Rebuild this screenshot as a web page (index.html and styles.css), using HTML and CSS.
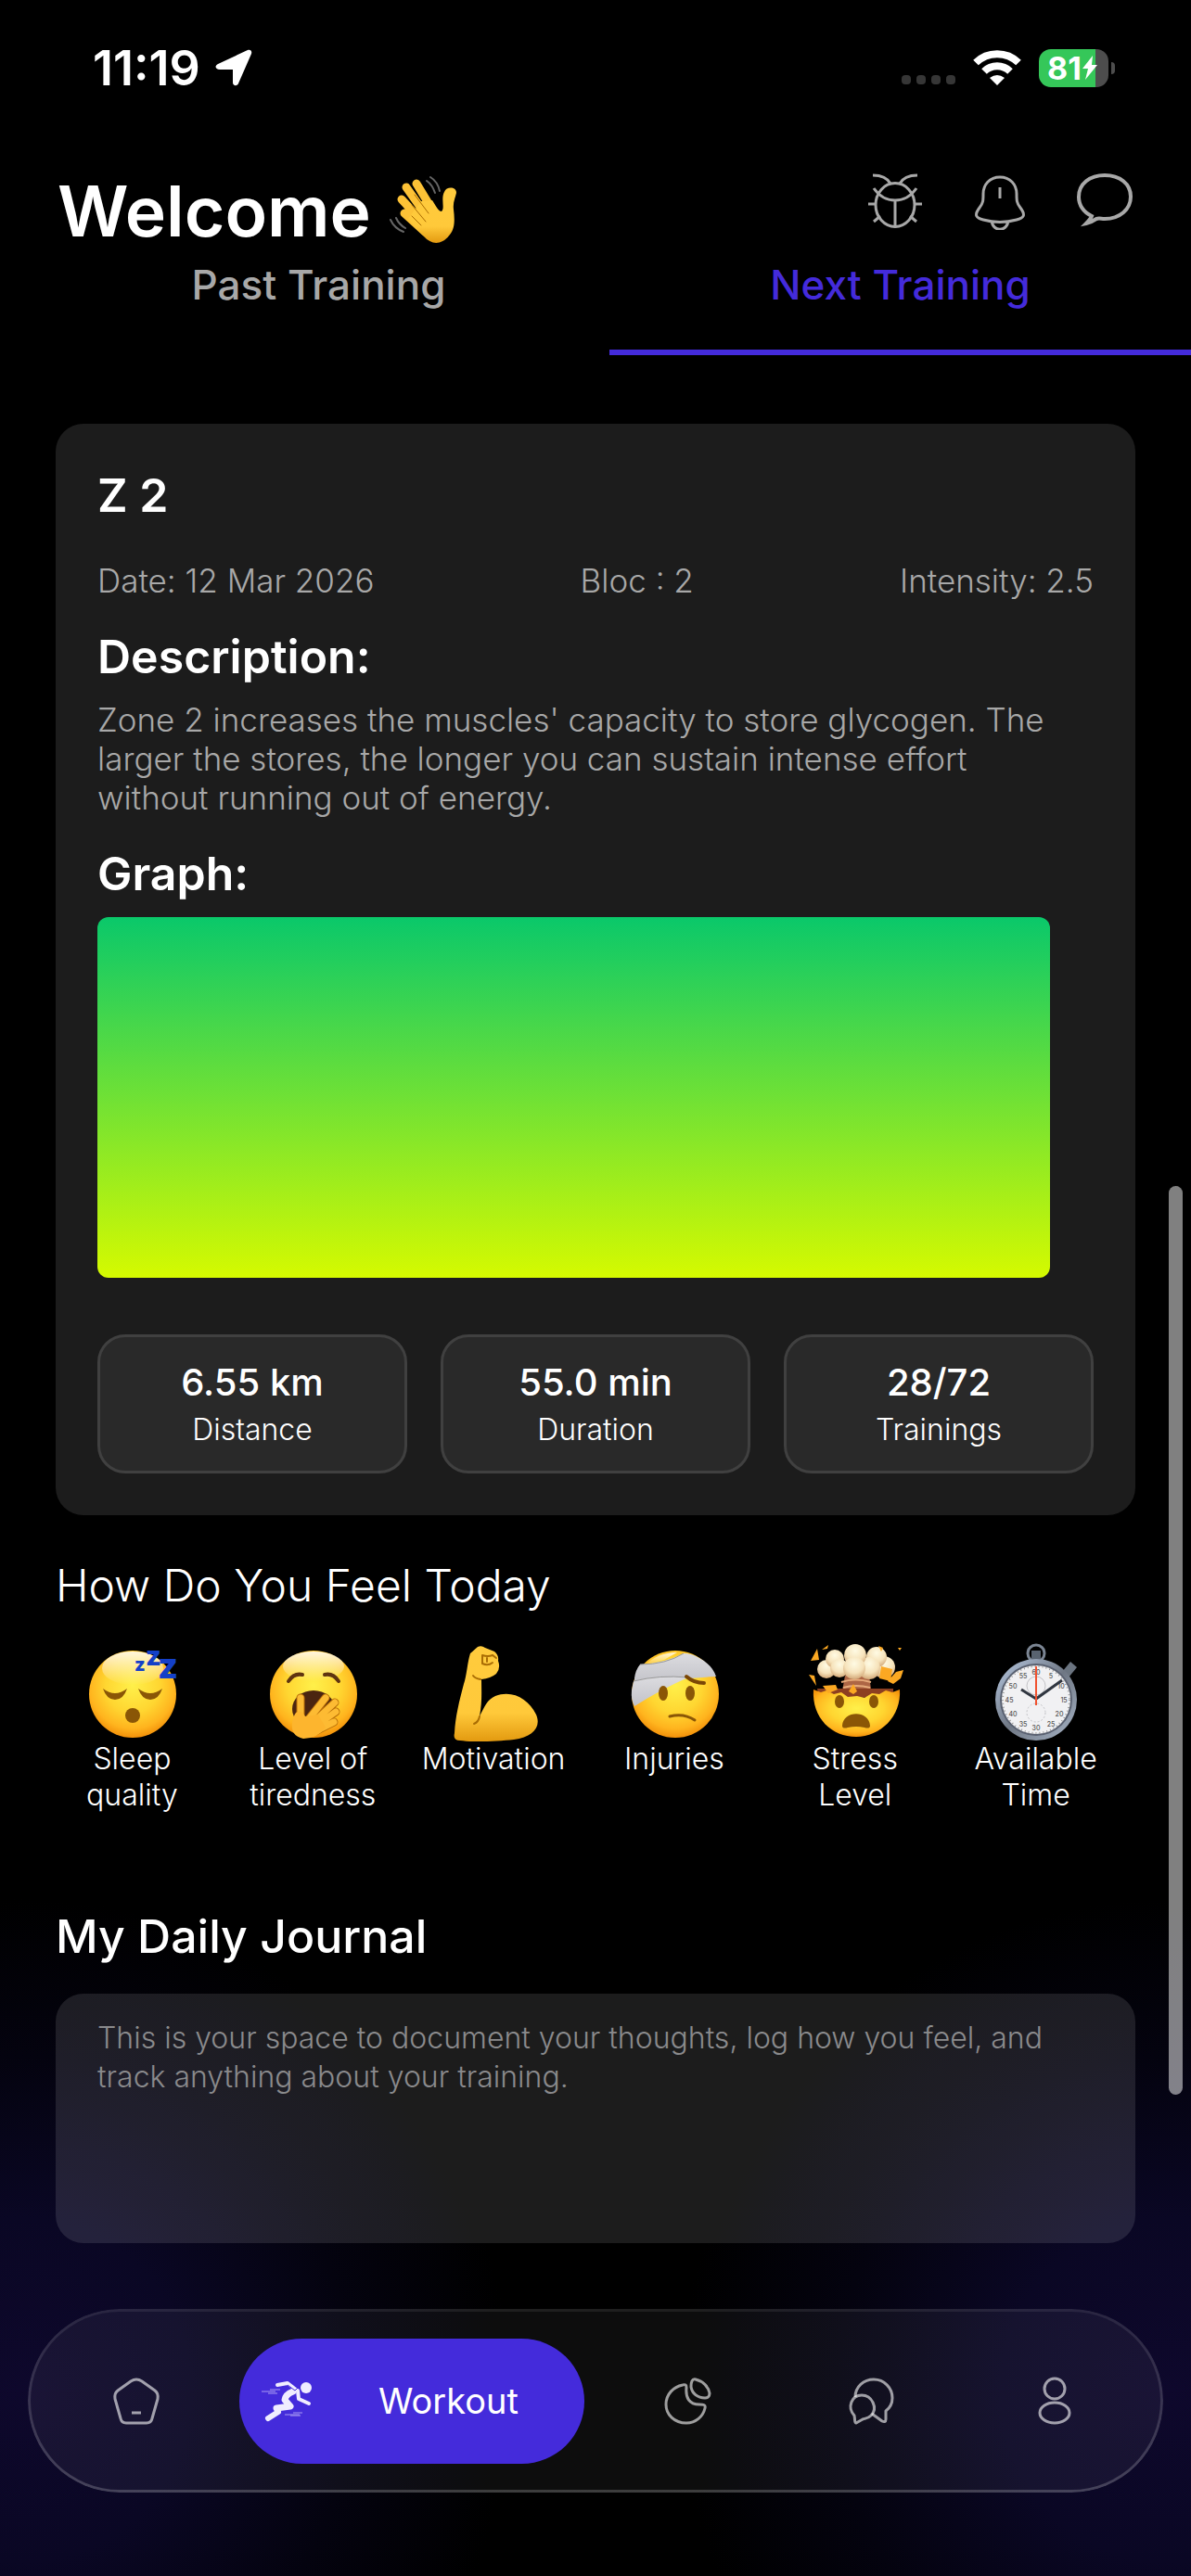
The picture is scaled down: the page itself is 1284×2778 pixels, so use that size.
FILE: index.html
```html
<!DOCTYPE html>
<html lang="en">
  <head>
    <title>Workout</title>
    <meta charset="utf-8">
    <meta name="viewport" content="width=device-width, initial-scale=1">
    <link rel="stylesheet" href="styles.css">
  </head>
  <body>
    <!-- gradients shared by the emoji -->
    <svg class="defs" width="0" height="0" aria-hidden="true">
      <defs>
        <radialGradient id="face" cx=".5" cy=".4" r=".62">
          <stop offset="0" stop-color="#fff04a"/>
          <stop offset=".5" stop-color="#ffd631"/>
          <stop offset=".8" stop-color="#ffb41e"/>
          <stop offset="1" stop-color="#f08a06"/>
        </radialGradient>
        <linearGradient id="shine" x1="0" y1="0" x2="0" y2="1">
          <stop offset="0" stop-color="#fff" stop-opacity=".85"/>
          <stop offset="1" stop-color="#fff" stop-opacity="0"/>
        </linearGradient>
        <linearGradient id="skin" x1="0" y1="0" x2="0" y2="1">
          <stop offset="0" stop-color="#ffcb3d"/>
          <stop offset=".7" stop-color="#ffc93a"/>
          <stop offset="1" stop-color="#e39a10"/>
        </linearGradient>
        <linearGradient id="bandage" x1="0" y1="0" x2="0" y2="1">
          <stop offset="0" stop-color="#dcdce0"/>
          <stop offset="1" stop-color="#c2c2c8"/>
        </linearGradient>
        <radialGradient id="puff" cx=".5" cy=".3" r=".7">
          <stop offset="0" stop-color="#fffbe4"/>
          <stop offset=".6" stop-color="#f6e3bb"/>
          <stop offset="1" stop-color="#d3a878"/>
        </radialGradient>
        <linearGradient id="steel" x1="0" y1="0" x2="1" y2="1">
          <stop offset="0" stop-color="#b9cbe4"/>
          <stop offset=".5" stop-color="#6f7784"/>
          <stop offset="1" stop-color="#a9b6c8"/>
        </linearGradient>
      </defs>
    </svg>

    <div class="status">
      <span class="time">11:19</span>
      <svg width="40" height="40" viewBox="0 0 40 40" role="img" aria-label="Location in use"><path d="M3 16 35 1c3-1 5 1 4 4L25 37c-1 3-6 3-6-1V22H5c-5 0-6-4-2-6z" fill="#fff"/></svg>
      <span class="signal"><i></i><i></i><i></i><i></i></span>
      <svg width="52" height="38" viewBox="0 0 52 38" role="img" aria-label="Wi-Fi">
        <g fill="none" stroke="#fff" stroke-width="8">
          <path d="M3 13.500a33 33 0 0 1 46 0"/>
          <path d="M12 23a20 20 0 0 1 28 0"/>
        </g>
        <path d="M26 38l-8-8q8-6 16 0z" fill="#fff"/>
      </svg>
      <span class="battery">81<svg width="18" height="26" viewBox="0 0 18 26" aria-hidden="true"><path d="M12 0 1 14h6L4 26 17 10h-6z" fill="#fff"/></svg></span>
    </div>

    <header class="header">
      <h1>Welcome</h1>
      <svg class="wave" width="74" height="74" viewBox="0 0 74 74" role="img" aria-label="Waving hand">
        <g fill="none" stroke="#666" stroke-width="2" stroke-linecap="round">
          <path d="M40 6q6 4 9 13M44 2q8 5 10 15M7 46q3 7 10 11M1 48q4 9 14 13"/>
        </g>
        <g stroke="#fdc236" stroke-width="9" stroke-linecap="round" fill="none">
          <path d="M29 9 46 37M18 13 40 44M13 26 37 52M16 41 38 61"/>
        </g>
        <path d="M34 28 46 27c5 8 7 12 10 12 4-3-1-14 3-21 2-6 13-6 13 1-1 5-4 10-3 18 1 9 2 20-4 27-9 12-20 11-28 2L20 47z" fill="url(#skin)"/>
        <path d="M27 21l15 20M24 32l15 18M24 44l10 10" stroke="#a96a00" stroke-width="1" stroke-linecap="round"/>
      </svg>
      <div class="actions">
        <button type="button" aria-label="Report a bug">
          <svg viewBox="0 0 62 62">
            <ellipse cx="31" cy="35" rx="21" ry="23.500"/>
            <path d="M8 17q9 13 23 13t23-13M31 30v28M7 3q14 0 19 9M55 3q-14 0-19 9M2 34h8M52 34h8M8 53l7-6M54 53l-7-6"/>
          </svg>
        </button>
        <button type="button" aria-label="Notifications">
          <svg viewBox="0 0 62 62">
            <path d="M31 5c-11 0-18 8-18 18 0 7 0 10-4 15-6 8-4 11 4 13 11 3 25 3 36 0 8-2 10-5 4-13-4-5-4-8-4-15 0-10-7-18-18-18zM31 16v12M22 53c3 11 15 11 18 0"/>
          </svg>
        </button>
        <button type="button" aria-label="Messages">
          <svg class="bold" viewBox="0 0 62 62">
            <path d="M17 47C8 43 3 35 3 26.500 3 12 15 3 31 3s28 9 28 23-12 24-28 24c-4 0-6-1-9 0-3 2-6 4-11 5 3-3 5-5 6-8z"/>
          </svg>
        </button>
      </div>
    </header>

    <div class="tabs" role="tablist">
      <button type="button" role="tab" aria-selected="false">Past Training</button>
      <button type="button" role="tab" aria-selected="true">Next Training</button>
    </div>

    <main>
      <article class="card">
        <h2>Z 2</h2>
        <div class="meta"><span>Date: 12 Mar 2026</span><span>Bloc : 2</span><span>Intensity: 2.5</span></div>
        <h3>Description:</h3>
        <p>Zone 2 increases the muscles' capacity to store glycogen. The larger the stores, the longer you can sustain intense effort without running out of energy.</p>
        <h3>Graph:</h3>
        <div class="graph"></div>
        <div class="stats">
          <div><strong>6.55 km</strong><span>Distance</span></div>
          <div><strong>55.0 min</strong><span>Duration</span></div>
          <div><strong>28/72</strong><span>Trainings</span></div>
        </div>
      </article>

      <h2 class="light">How Do You Feel Today</h2>
      <div class="feelings">
        <button type="button">
          <svg viewBox="0 0 102 102" aria-hidden="true">
            <circle cx="52" cy="52" r="47" fill="url(#face)"/>
            <ellipse cx="52" cy="24" rx="33" ry="18" fill="url(#shine)"/>
            <g fill="#8a5606"><path d="M20 46q13 10 26 0-4 12-13 12t-13-12zM58 46q13 10 26 0-4 12-13 12t-13-12z"/><ellipse cx="52" cy="75" rx="8" ry="8"/></g>
            <g class="snore"><text x="54" y="27" font-size="20">z</text><text x="66" y="21" font-size="29">z</text><text x="79" y="35" font-size="38">z</text></g>
          </svg>
          Sleep quality
        </button>
        <button type="button">
          <svg viewBox="0 0 102 102" aria-hidden="true">
            <circle cx="52" cy="52" r="47" fill="url(#face)"/>
            <ellipse cx="52" cy="22" rx="33" ry="16" fill="url(#shine)"/>
            <path d="M25 38q6-9 15-7M79 38q-6-9-15-7" fill="none" stroke="#5f3410" stroke-width="4" stroke-linecap="round"/>
            <ellipse cx="52" cy="68" rx="23" ry="20" fill="#4b2510"/>
            <g fill="none" stroke-linecap="round">
              <g stroke="#b96f08" stroke-width="9"><path d="M38 56v26M46 80 65 56M50 84 75 61M52 88 76 71M54 92 74 82"/></g>
              <g stroke="#fdbb33" stroke-width="7"><path d="M38 56v26M46 80 65 56M50 84 75 61M52 88 76 71M54 92 74 82"/></g>
            </g>
            <path d="M33 72q6-4 10 4l14-2 8 14q-9 12-24 12-14-3-12-17 1-7 4-11z" fill="#fdb52e"/>
          </svg>
          Level of tiredness
        </button>
        <button type="button">
          <svg viewBox="0 0 102 102" aria-hidden="true">
            <path d="M26 8 34 1q4-2 8 1l10 4q5 4 4 10 3 8-2 14-6 5-16 6c0 13 1 24-2 40 5-10 8-18 17-22 18-7 36 3 44 20 6 14-4 24-24 27-18 2-44 3-58 1q-8 0-6-8C10 76 14 60 19 41c3-8 4-24 7-33z" fill="url(#skin)"/>
            <path d="M37 36q-6-1-8-4M39 10q6 2 11 0l4 3M39 10v9q6 3 11-1M44 13v4M36 76q-1 6-6 8" fill="none" stroke="#aa6d04" stroke-width="2" stroke-linecap="round"/>
          </svg>
          Motivation
        </button>
        <button type="button">
          <svg viewBox="0 0 102 102" aria-hidden="true">
            <circle cx="52" cy="52" r="47" fill="url(#face)"/>
            <path d="M19 21Q33 7 54 7L40 15z" fill="url(#shine)"/>
            <path d="M8 35q1-9 6-15Q42 18 61 8q8 0 15 4 16 8 20 21-44 2-88 8z" fill="url(#bandage)"/>
            <path d="M7 38q28-7 59-4Q38 46 8 65 4 58 5 48z" fill="url(#bandage)"/>
            <path d="M7 38q28-7 59-4M14 20q28 0 47-12" fill="none" stroke="#999" stroke-width="1"/>
            <path d="M64 33q8 7 19 7" fill="none" stroke="#7b4706" stroke-width="4" stroke-linecap="round"/>
            <g fill="#8a5606"><ellipse cx="39" cy="51" rx="5" ry="8"/><ellipse cx="68" cy="51" rx="5" ry="8"/></g>
            <path d="M46 76q15-4 27 4" fill="none" stroke="#8a5606" stroke-width="3" stroke-linecap="round"/>
          </svg>
          Injuries
        </button>
        <button type="button">
          <svg viewBox="0 0 102 102" aria-hidden="true">
            <path d="M40 32h26l3 22H36z" fill="#ad6645"/>
            <path d="M36 39q15-5 32 0M38 45q14-4 29 0" stroke="#e6ab7b" stroke-width="2" fill="none"/>
            <path d="M10 46 92 46 92 55 12 57z" fill="#8c3f21"/>
            <path d="M6 47l8 3 6-2 8 4 8-2 7 5 10-1 8 2 8-5 8 1 7-4 7 2 8-3C101 76 78 98 52 98S4 78 6 47z" fill="url(#face)"/>
            <g fill="url(#puff)">
              <circle cx="20" cy="25" r="10"/><circle cx="82" cy="23" r="12"/><circle cx="29" cy="14" r="10"/><circle cx="74" cy="12" r="11"/>
              <circle cx="34" cy="24" r="10"/><circle cx="66" cy="24" r="12"/><circle cx="51" cy="10" r="12"/><circle cx="50" cy="24" r="12"/>
            </g>
            <path d="M3 16 10 3l2 12zM15 4l7-5-1 4zM76 0l5 2-2 4zM97 2h4l-2 3zM1 31l6 1 2 11zM79 22l12 3-2 13-12-3zM86 38l9-10 8-2-3 9-8 6zM16 43l14-1 2 5-10 4zM44 49l5-8 4 8-4 3z" fill="#fba822"/>
            <g fill="#8a5606"><ellipse cx="34" cy="60" rx="5" ry="7"/><ellipse cx="71" cy="60" rx="5" ry="7"/><path d="M37 86c1-17 29-17 30 0 0 3-3 3-6 2q-9-2-18 0c-3 1-6 1-6-2z"/></g>
          </svg>
          Stress Level
        </button>
        <button type="button">
          <svg viewBox="0 0 102 102" aria-hidden="true">
            <circle cx="51" cy="8" r="9" fill="none" stroke="#7b8593" stroke-width="3"/>
            <path d="M46 5h10v12H46z" fill="#596370"/>
            <path d="M79 28 88 17l7 6-9 11z" fill="#6b7480"/>
            <circle cx="51" cy="58" r="44" fill="url(#steel)"/>
            <circle cx="51" cy="58" r="39" fill="#596070"/>
            <circle cx="51" cy="58" r="37" fill="#f1f1f3"/>
            <circle cx="51" cy="58" r="36" fill="none" stroke="#999" stroke-width="2" stroke-dasharray="1 3"/>
            <g fill="none" stroke="#c2c2c6"><circle cx="51" cy="43" r="10"/><circle cx="51" cy="72" r="10" stroke-dasharray="2 2"/></g>
            <g class="dial"><text x="51" y="31">60</text><text x="67" y="35">5</text><text x="78" y="46">10</text><text x="81" y="61">15</text><text x="76" y="76">20</text><text x="67" y="87">25</text><text x="51" y="91">30</text><text x="37" y="87">35</text><text x="26" y="76">40</text><text x="22" y="61">45</text><text x="26" y="46">50</text><text x="37" y="35">55</text></g>
            <path d="M51 57 35 47M51 57l28-20" stroke="#303640" stroke-width="3"/>
            <path d="M51 22v42" stroke="#f05230" stroke-width="2"/>
          </svg>
          Available Time
        </button>
      </div>

      <h2 class="medium"><label for="journal">My Daily Journal</label></h2>
      <textarea id="journal" placeholder="This is your space to document your thoughts, log how you feel, and track anything about your training."></textarea>
    </main>

    <nav class="nav">
      <a href="#home" aria-label="Home">
        <svg viewBox="0 0 54 54"><path d="M21 6q6-4 12 0l14 10q4 3 3 9l-6 21q-1 5-6 5H16q-5 0-6-5L4 25q-1-6 3-9zM22 40h10"/></svg>
      </a>
      <a class="active" href="#workout" aria-current="page">
        <svg class="runner" viewBox="0 0 54 54" aria-hidden="true">
          <g fill="none" stroke="#f0edff" stroke-width="4" stroke-linecap="round" stroke-linejoin="round">
            <path d="M17 10l11-2 9 7M39 16l1 9 11 5"/>
            <path d="M34 17q-8 3-9 9l6 7-15 2" stroke-width="7"/>
            <path d="M18 39 7 46" stroke-width="6"/>
          </g>
          <path d="M28 10l8 6 3-3" fill="none" stroke="#442bdb" stroke-width="1"/>
          <circle cx="48" cy="13" r="6" fill="#f0edff"/>
          <path d="M0 17h15M9 15h11M7 19h10M25 42h16M34 40h10M31 43h11" stroke="#a99bf2" stroke-width="1"/>
        </svg>
        Workout
      </a>
      <a href="#stats" aria-label="Statistics">
        <svg viewBox="0 0 54 54"><path d="M22 10c3-1 4 0 4 3-1 11 3 18 14 18 4 0 7 0 6 4-2 9-10 16-20 16C13 51 4 42 4 31c0-11 8-19 18-21zM36 4c8 2 14 8 15 15 0 3-2 5-5 5-8 0-14-5-15-12 0-5 1-9 5-8z"/></svg>
      </a>
      <a href="#chat" aria-label="Chat">
        <svg viewBox="0 0 54 54"><path d="M10 23C10 12 19 4 30 4s20 9 20 20c0 6-3 11-7 14v9c0 3-2 3-4 2l-11-8"/><path d="M9 43c-8-9-3-22 8-22s18 14 10 22c-3 3-6 3-9 4l-7 4c-2 0-1-3-2-8z"/></svg>
      </a>
      <a href="#profile" aria-label="Profile">
        <svg viewBox="0 0 54 54"><circle cx="27" cy="14" r="11"/><ellipse cx="27" cy="40" rx="16" ry="11"/></svg>
      </a>
    </nav>

    <div class="scrollbar"></div>
  </body>
</html>
```

FILE: styles.css
```css
* { box-sizing: border-box; }

body {
  position: relative;
  margin: 0;
  min-height: 100vh;
  color: #fff;
  font-family: Inter, "Liberation Sans", sans-serif;
  background:
    radial-gradient(circle 530px at 20px calc(100% - 200px), #0e082c, #0a0724 35%, #04030f 68%, transparent),
    radial-gradient(circle 530px at calc(100% - 20px) calc(100% - 200px), #0e082c, #0a0724 35%, #04030f 68%, transparent),
    #000;
}

h1, h2, h3, p { margin: 0; }

button {
  border: 0;
  padding: 0;
  background: none;
  color: inherit;
  font: inherit;
}

svg { display: block; flex: none; }

.defs { position: absolute; }

/* Status bar */
.status {
  display: flex;
  align-items: center;
  height: 101px;
  padding: 45px 89px 0 100px;
}
.time {
  margin-right: 16px;
  font-size: 52px;
  font-weight: 600;
}
.signal {
  display: flex;
  gap: 6px;
  align-self: flex-end;
  margin: 0 19px 10px auto;
}
.signal i {
  width: 10px;
  height: 10px;
  border-radius: 4px;
  background: #363636;
}
.battery {
  position: relative;
  display: flex;
  align-items: center;
  width: 75px;
  height: 41px;
  margin-left: 19px;
  padding-left: 9px;
  border-radius: 13px;
  background: linear-gradient(90deg, #35c759 81%, #4d4d4d 81%);
  font-size: 34px;
  font-weight: 700;
}
.battery::after {
  content: "";
  position: absolute;
  right: -7px;
  width: 4px;
  height: 13px;
  border-radius: 0 4px 4px 0;
  background: #4d4d4d;
}

/* Header */
.header {
  display: flex;
  align-items: flex-start;
  margin-top: 85px;
  padding: 0 62px;
}
.header h1 {
  padding-top: 2px;
  font-size: 75px;
  font-weight: 600;
  line-height: 80px;
}
.wave { margin: 3px 0 0 20px; }
.actions {
  display: flex;
  gap: 51px;
  margin-left: auto;
}
.actions svg {
  width: 62px;
  height: 62px;
  fill: none;
  stroke: #a8a8a8;
  stroke-width: 3px;
}
.actions svg.bold { stroke-width: 4px; }

/* Tabs */
.tabs {
  display: flex;
  margin-left: 30px;
}
.tabs button {
  flex: 1;
  padding: 13px 0 43px;
  border-bottom: 6px solid transparent;
  color: #a8a8a8;
  font-size: 44px;
  font-weight: 500;
  line-height: 53px;
}
.tabs [aria-selected="true"] {
  border-color: #442bdb;
  color: #442bdb;
}

main { padding: 74px 60px 0; }
main h2, main h3 {
  font-size: 50px;
  font-weight: 600;
  line-height: 60px;
}
main h2.light { margin-top: 46px; font-size: 48px; font-weight: 300; }
main h2.medium { margin: 103px 0 32px; font-weight: 500; }

/* Training card */
.card {
  padding: 47px 45px 45px;
  border-radius: 30px;
  background: #1c1c1c;
}
.card h3 { margin: 31px 0 17px; }
.meta, .card p {
  color: #a8a8a8;
  font-size: 35px;
  font-weight: 300;
  line-height: 42px;
}
.meta {
  display: flex;
  justify-content: space-between;
  margin-top: 41px;
}
.card p { padding-right: 30px; }
.graph {
  height: 389px;
  margin-right: 47px;
  border-radius: 12px;
  background: linear-gradient(#0ac86a, #d5fa00);
}
.stats {
  display: grid;
  grid-template-columns: repeat(3, 1fr);
  gap: 36px;
  margin-top: 61px;
}
.stats div {
  display: grid;
  gap: 7px;
  padding: 25px 0 24px;
  border: 3px solid #404040;
  border-radius: 30px;
  background: #292929;
  text-align: center;
}
.stats strong {
  font-size: 40px;
  font-weight: 500;
  line-height: 48px;
}
.stats span {
  font-size: 32px;
  font-weight: 300;
  line-height: 40px;
}

/* Feelings */
.feelings {
  display: grid;
  grid-template-columns: repeat(6, 1fr);
  align-items: start;
  margin: 35px 10px 0 -15px;
}
.feelings button {
  padding: 0 12px;
  font-size: 32px;
  font-weight: 300;
  line-height: 39px;
}
.feelings svg {
  width: 102px;
  height: 102px;
  margin: 0 auto;
  overflow: visible;
}
.snore { fill: #1440c8; font-weight: 800; }
.dial {
  fill: #555;
  font-size: 7px;
  font-weight: 500;
  text-anchor: middle;
}

/* Journal */
textarea {
  display: block;
  width: 100%;
  height: 269px;
  padding: 27px 45px;
  border: 0;
  border-radius: 30px;
  resize: none;
  background: rgba(255, 255, 255, .11);
  color: #fff;
  font: 300 32px/42px Inter, "Liberation Sans", sans-serif;
}
textarea::placeholder { color: #8a8a8c; }

/* Bottom navigation */
.nav {
  position: relative;
  display: grid;
  grid-template-columns: 1fr 2fr 1fr 1fr 1fr;
  align-items: center;
  height: 198px;
  margin: 71px 30px 90px;
  padding: 0 18px;
  border-radius: 99px;
  background: rgba(255, 255, 255, .05);
}
/* gradient outline */
.nav::before {
  content: "";
  position: absolute;
  inset: 0;
  padding: 3px;
  border-radius: inherit;
  background: linear-gradient(rgba(255, 255, 255, .08), rgba(255, 255, 255, .2));
  mask: linear-gradient(#000 0 0) content-box exclude, linear-gradient(#000 0 0);
  pointer-events: none;
}
.nav a {
  display: flex;
  justify-content: center;
  color: #fff;
  text-decoration: none;
}
.nav svg {
  width: 54px;
  height: 54px;
  fill: none;
  stroke: rgba(255, 255, 255, .6);
  stroke-width: 3px;
  stroke-linejoin: round;
}
.nav .runner { stroke: none; stroke-width: inherit; }
.nav .active {
  align-items: center;
  justify-content: flex-start;
  gap: 72px;
  height: 135px;
  margin: 0 12px;
  padding-left: 24px;
  border-radius: 68px;
  background: #442bdb;
  font-size: 38px;
}

.scrollbar {
  position: absolute;
  top: 1279px;
  right: 9px;
  width: 15px;
  height: 980px;
  border-radius: 8px;
  background: rgba(255, 255, 255, .5);
}
```
